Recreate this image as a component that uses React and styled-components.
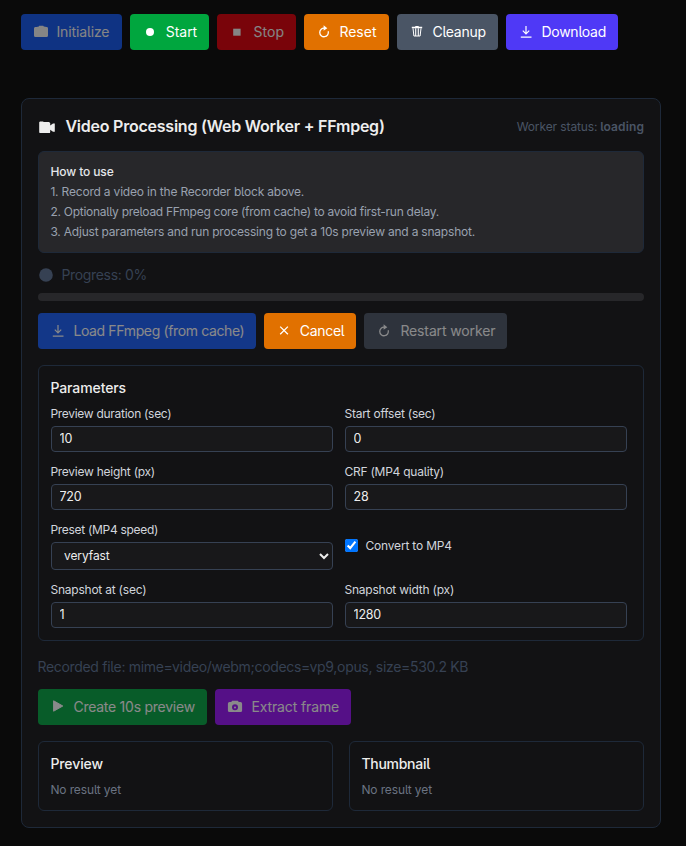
import React from 'react';
import styled, { createGlobalStyle } from 'styled-components';

const GlobalStyle = createGlobalStyle`
  *, *::before, *::after { box-sizing: border-box; }
  body {
    margin: 0;
    background: #0a0a0a;
    color: #ededed;
    font-family: Inter, "Liberation Sans", sans-serif;
    font-feature-settings: "cv05";
    font-size: 14px;
    line-height: 20px;
  }
`;

const Page = styled.main`
  width: 682px;
  height: 846px;
  padding: 14px 21px 0;
`;

const Toolbar = styled.div`
  display: flex;
  gap: 8px;
`;

const Tracked = styled.span`
  margin-left: ${(p) => p.$shift ?? -0.6}px;
  letter-spacing: ${(p) => p.$track || 0}px;
  white-space: pre;
`;

const ActionButton = styled.button`
  display: flex;
  align-items: center;
  gap: 8px;
  flex: none;
  width: ${(p) => p.$width}px;
  height: 36px;
  padding: 0 0 0 12px;
  border: 0;
  border-radius: 4px;
  background: ${(p) => p.$color};
  color: #fff;
  font: inherit;
  font-feature-settings: inherit;
  opacity: ${(p) => (p.disabled ? 0.5 : 1)};
`;

const Glyph = styled.svg`
  display: block;
  flex: none;
  width: 16px;
  height: 16px;
`;

const Card = styled.section`
  display: flex;
  flex-direction: column;
  width: 640px;
  height: 730px;
  margin-top: 48px;
  padding: 16px;
  border: 1px solid #1e2939;
  border-radius: 8px;
  background: #121214;
`;

const CardHeader = styled.header`
  display: flex;
  align-items: center;
  justify-content: space-between;
  height: 24px;
`;

const CardTitle = styled.h2`
  display: flex;
  align-items: center;
  gap: 11px;
  margin: 0;
  padding: 0 0 2px 1px;
  font-size: 16px;
  line-height: 24px;
  font-weight: 600;
`;

const Status = styled.div`
  color: #4a5565;
  font-size: 12px;
  line-height: 16px;
`;

const StatusValue = styled(Tracked)`
  font-weight: 600;
`;

const HowTo = styled.div`
  margin-top: 12px;
  height: 102px;
  padding: 12px;
  border: 1px solid #1e2939;
  border-radius: 6px;
  background: #27272a;
  color: #99a1af;
  font-size: 12px;
  line-height: 16px;
`;

const HowToTitle = styled.div`
  color: #e5e7eb;
  font-weight: 500;
`;

const Step = styled.div`
  margin-top: 4px;
`;

const Progress = styled.div`
  display: flex;
  align-items: center;
  gap: 8px;
  margin-top: 12px;
  color: #364153;
`;

const ProgressTrack = styled.div`
  height: 8px;
  margin-top: 8px;
  border-radius: 4px;
  background: #27272a;
`;

const ActionRow = styled(Toolbar)`
  margin-top: 12px;
`;

const Panel = styled.div`
  margin-top: 16px;
  padding: 12px;
  border: 1px solid #1e2939;
  border-radius: 6px;
`;

const PanelTitle = styled.h3`
  margin: 0 0 8px;
  font-size: 14px;
  line-height: 20px;
  font-weight: 500;
`;

const Fields = styled.div`
  display: grid;
  grid-template-columns: 1fr 1fr;
  gap: 12px;
  width: 576px;
`;

const Field = styled.label`
  display: flex;
  flex-direction: column;
  gap: 4px;
  color: #d1d5dc;
  font-size: 12px;
  line-height: 16px;
`;

const CheckField = styled.label`
  display: flex;
  align-items: center;
  gap: 8px;
  color: #d1d5dc;
  font-size: 12px;
  line-height: 16px;
`;

const Checkbox = styled.input`
  width: 13px;
  height: 13px;
  margin: 0 0 1px;
`;

const TextInput = styled.input`
  width: 100%;
  height: 26px;
  padding: 3px 7.5px 5px;
  border: 1px solid #364153;
  border-radius: 4px;
  background: #18181a;
  color: #ededed;
  font: 12.5px/16px Inter, sans-serif;
  letter-spacing: -0.2px;
`;

const Select = styled.select`
  width: 100%;
  height: 28px;
  padding: 3px 7px 5px 8px;
  border: 1px solid #364153;
  border-radius: 4px;
  background: #18181a;
  color: #ededed;
  font: 12px/16px Inter, sans-serif;
  letter-spacing: -0.1px;
`;

const FileInfo = styled.div`
  margin-top: 16px;
  color: #364153;
`;

const Results = styled.div`
  display: grid;
  grid-template-columns: 1fr 1fr;
  gap: 16px;
`;

const Empty = styled.div`
  color: #6a7282;
  font-size: 12px;
  line-height: 16px;
`;

const cameraBody =
  'M4.2 3.1 5.2 1.7h5.6l1 1.4h1.7q1.6 0 1.6 1.6v6.8q0 1.6-1.6 1.6h-11Q.9 13.1.9 11.5V4.7q0-1.6 1.6-1.6z';

const icons = {
  cameraSolid: (
    <path d="M3.6 3 5.8 2.5 6.2 1.7h4l.6.8 2.8.5q1.4 0 1.4 1.4v7q0 1.6-1.5 1.6h-11Q1 13 1 11.4v-7Q1 3.2 2.2 3z" fill="currentColor" />
  ),
  camera: (
    <path
      fill="currentColor"
      fillRule="evenodd"
      d={`${cameraBody}M8 5.2a3 3 0 1 0 0 6 3 3 0 1 0 0-6zM8 7.6a1 1 0 1 1 0 2 1 1 0 1 1 0-2z`}
    />
  ),
  record: <circle cx="8" cy="8" r="4" fill="currentColor" />,
  stop: <rect x="4.2" y="4.7" width="7.4" height="7" fill="currentColor" />,
  reset: (
    <>
      <path d="M8.6 4.2A4.3 4.3 0 1 0 12.2 7.3" fill="none" stroke="currentColor" strokeWidth="1.3" />
      <path d="M7.6 1.3 11.3 4.3 7.6 6.8z" fill="currentColor" />
    </>
  ),
  trash: (
    <>
      <path d="M6.3 1.9h3.4v.8h3.5v1.6H2.8V2.7h3.5z" fill="currentColor" />
      <path d="M4 4.3 4.9 12h6.2l.9-7.7" fill="none" stroke="currentColor" strokeWidth="1" />
      <path d="M6.7 4.3v7.7M9.3 4.3v7.7" stroke="currentColor" strokeWidth="1.1" />
    </>
  ),
  download: (
    <path d="M8 2v7.8M4.8 6.7 8 9.9l3.2-3.2M2.8 13.2h10.7" fill="none" stroke="currentColor" strokeWidth="1.2" />
  ),
  close: <path d="M4.2 3.6 11.9 11.3M11.9 3.6 4.2 11.3" stroke="currentColor" strokeWidth="1.3" />,
  play: (
    <path d="M3.6 1.8 12.8 7 3.6 12.2z" fill="currentColor" stroke="currentColor" strokeWidth="1" strokeLinejoin="round" />
  ),
  video: (
    <path
      d="M.2 4.2 1 3.4h3l.7.7H10l1.2.9v2.6l2.8-2.1h1.8v8.3H14l-2.8-2.1v2.2q0 1.2-1.2 1.2H1.6Q.2 15.1.2 13.9z"
      fill="currentColor"
    />
  ),
  dot: <circle cx="8" cy="8" r="6.8" fill="currentColor" />,
};

function Icon({ name }) {
  return (
    <Glyph viewBox="0 0 16 16" aria-hidden="true">
      {icons[name]}
    </Glyph>
  );
}

function Action({ icon, label, track, shift, width, color, disabled }) {
  return (
    <ActionButton $width={width} $color={color} disabled={disabled}>
      <Icon name={icon} />
      <Tracked $track={track} $shift={shift}>{label}</Tracked>
    </ActionButton>
  );
}

function NumberField({ label, track, value }) {
  return (
    <Field>
      <Tracked $track={track}>{label}</Tracked>
      <TextInput type="number" defaultValue={value} />
    </Field>
  );
}

function ResultPanel({ title, track }) {
  return (
    <Panel>
      <PanelTitle>
        <Tracked $track={track}>{title}</Tracked>
      </PanelTitle>
      <Empty>
        <Tracked $track={-0.12}>No result yet</Tracked>
      </Empty>
    </Panel>
  );
}

export default function App() {
  return (
    <>
      <GlobalStyle />
      <Page>
        <Toolbar>
          <Action icon="cameraSolid" label="Initialize" track={-0.12} width={101} color="#155dfc" disabled />
          <Action icon="record" label="Start" track={-0.02} shift={-0.3} width={79} color="#00a63e" />
          <Action icon="stop" label="Stop" track={0.1} shift={0.4} width={79} color="#e7000b" disabled />
          <Action icon="reset" label="Reset" track={0} width={85} color="#e17100" />
          <Action icon="trash" label="Cleanup" track={-0.25} width={101} color="#4a5565" />
          <Action icon="download" label="Download" track={-0.25} width={112} color="#4f39f6" />
        </Toolbar>

        <Card>
          <CardHeader>
            <CardTitle>
              <Icon name="video" />
              <Tracked $track={-0.23}>Video Processing (Web Worker + FFmpeg)</Tracked>
            </CardTitle>
            <Status>
              <Tracked $track={-0.1} $shift={0}>Worker status: </Tracked>
              <StatusValue $track={0.1}>loading</StatusValue>
            </Status>
          </CardHeader>

          <HowTo>
            <HowToTitle>
              <Tracked $track={-0.1}>How to use</Tracked>
            </HowToTitle>
            <Step>
              <Tracked $track={-0.19}>1. Record a video in the Recorder block above.</Tracked>
            </Step>
            <Step>
              <Tracked $track={-0.27}>2. Optionally preload FFmpeg core (from cache) to avoid first-run delay.</Tracked>
            </Step>
            <Step>
              <Tracked $track={-0.21}>3. Adjust parameters and run processing to get a 10s preview and a snapshot.</Tracked>
            </Step>
          </HowTo>

          <Progress>
            <Icon name="dot" />
            <Tracked $track={-0.33}>Progress: 0%</Tracked>
          </Progress>
          <ProgressTrack />

          <ActionRow>
            <Action icon="download" label="Load FFmpeg (from cache)" track={-0.37} width={218} color="#155dfc" disabled />
            <Action icon="close" label="Cancel" track={-0.3} shift={-0.2} width={92} color="#e17100" />
            <Action icon="reset" label="Restart worker" track={-0.13} shift={0.4} width={143} color="#4a5565" disabled />
          </ActionRow>

          <Panel>
            <PanelTitle>
              <Tracked $track={-0.1}>Parameters</Tracked>
            </PanelTitle>
            <Fields>
              <NumberField label="Preview duration (sec)" track={-0.29} value={10} />
              <NumberField label="Start offset (sec)" track={-0.23} value={0} />
              <NumberField label="Preview height (px)" track={-0.26} value={720} />
              <NumberField label="CRF (MP4 quality)" track={-0.24} value={28} />
              <Field>
                <Tracked $track={-0.3}>Preset (MP4 speed)</Tracked>
                <Select defaultValue="veryfast">
                  <option value="veryfast">veryfast</option>
                </Select>
              </Field>
              <CheckField>
                <Checkbox type="checkbox" defaultChecked />
                <Tracked $track={-0.18}>Convert to MP4</Tracked>
              </CheckField>
              <NumberField label="Snapshot at (sec)" track={-0.22} value={1} />
              <NumberField label="Snapshot width (px)" track={-0.22} value={1280} />
            </Fields>
          </Panel>

          <FileInfo>
            <Tracked $track={-0.31}>Recorded file: mime=video/webm;codecs=vp9,opus, size=530.2 KB</Tracked>
          </FileInfo>
          <ActionRow>
            <Action icon="play" label="Create 10s preview" track={-0.25} width={169} color="#00a63e" disabled />
            <Action icon="camera" label="Extract frame" track={-0.12} shift={0.4} width={136} color="#9810fa" disabled />
          </ActionRow>

          <Results>
            <ResultPanel title="Preview" track={-0.1} />
            <ResultPanel title="Thumbnail" track={-0.28} />
          </Results>
        </Card>
      </Page>
    </>
  );
}
